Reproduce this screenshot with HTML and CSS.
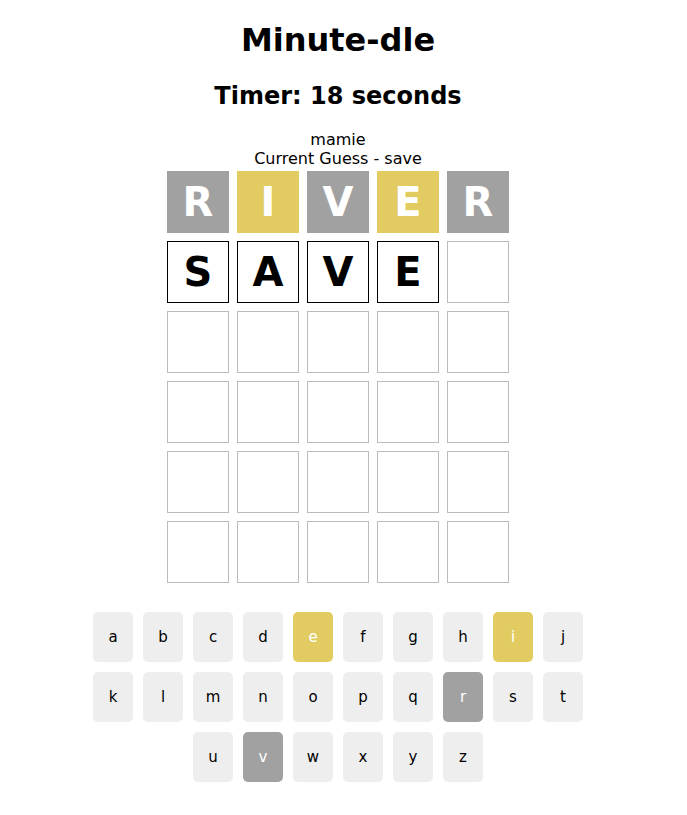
FILE: index.html
```html
<!DOCTYPE html>
<html>
<head>
<meta charset="utf-8">
<link rel="stylesheet" href="styles.css">
</head>
<body>
<div class="app">
  <h1 class="title">Minute-dle</h1>
  <h2 class="timer">Timer: 18 seconds</h2>
  <div class="info">mamie</div>
  <div class="info">Current Guess - save</div>
  <div class="board">
    <div class="row">
      <div class="tile absent">R</div>
      <div class="tile present">I</div>
      <div class="tile absent">V</div>
      <div class="tile present">E</div>
      <div class="tile absent">R</div>
    </div>
    <div class="row">
      <div class="tile typed">S</div>
      <div class="tile typed">A</div>
      <div class="tile typed">V</div>
      <div class="tile typed">E</div>
      <div class="tile"></div>
    </div>
    <div class="row"><div class="tile"></div><div class="tile"></div><div class="tile"></div><div class="tile"></div><div class="tile"></div></div>
    <div class="row"><div class="tile"></div><div class="tile"></div><div class="tile"></div><div class="tile"></div><div class="tile"></div></div>
    <div class="row"><div class="tile"></div><div class="tile"></div><div class="tile"></div><div class="tile"></div><div class="tile"></div></div>
    <div class="row"><div class="tile"></div><div class="tile"></div><div class="tile"></div><div class="tile"></div><div class="tile"></div></div>
  </div>
  <div class="keyboard">
    <div class="krow">
      <div class="key">a</div><div class="key">b</div><div class="key">c</div><div class="key">d</div><div class="key present">e</div><div class="key">f</div><div class="key">g</div><div class="key">h</div><div class="key present">i</div><div class="key">j</div>
    </div>
    <div class="krow">
      <div class="key">k</div><div class="key">l</div><div class="key">m</div><div class="key">n</div><div class="key">o</div><div class="key">p</div><div class="key">q</div><div class="key absent">r</div><div class="key">s</div><div class="key">t</div>
    </div>
    <div class="krow">
      <div class="key">u</div><div class="key absent">v</div><div class="key">w</div><div class="key">x</div><div class="key">y</div><div class="key">z</div>
    </div>
  </div>
</div>
</body>
</html>
```
FILE: styles.css
```css
body {
  margin: 8px 19px 8px 8px;
  font-family: "DejaVu Sans", Verdana, sans-serif;
  background: #fff;
  color: #000;
}
.app {
  display: flex;
  flex-direction: column;
  align-items: center;
}
.title {
  font-size: 32px;
  font-weight: bold;
  margin: 13px 0 21px;
}
.timer {
  font-size: 24px;
  font-weight: bold;
  margin: 2px 0 20px;
}
.info {
  font-size: 16px;
  line-height: 19px;
}
.board {
  margin-top: 3px;
  display: flex;
  flex-direction: column;
  gap: 8px;
}
.row {
  display: flex;
  gap: 8px;
}
.tile {
  width: 60px;
  height: 60px;
  border: 1px solid #bbb;
  display: flex;
  align-items: center;
  justify-content: center;
  font-size: 40px;
  font-weight: bold;
  text-transform: uppercase;
}
.tile.typed {
  border-color: #000;
}
.tile.absent {
  background: #a1a1a1;
  border-color: #a1a1a1;
  color: #fff;
}
.tile.present {
  background: #e2cc62;
  border-color: #e2cc62;
  color: #fff;
}
.keyboard {
  margin-top: 29px;
  display: flex;
  flex-direction: column;
  align-items: center;
  gap: 10px;
}
.krow {
  display: flex;
  gap: 10px;
}
.key {
  width: 40px;
  height: 50px;
  border-radius: 5px;
  background: #eeeeee;
  display: flex;
  align-items: center;
  justify-content: center;
  font-size: 15px;
  color: #000;
}
.key.present {
  background: #e2cc62;
  color: #fff;
}
.key.absent {
  background: #a1a1a1;
  color: #fff;
}
```
